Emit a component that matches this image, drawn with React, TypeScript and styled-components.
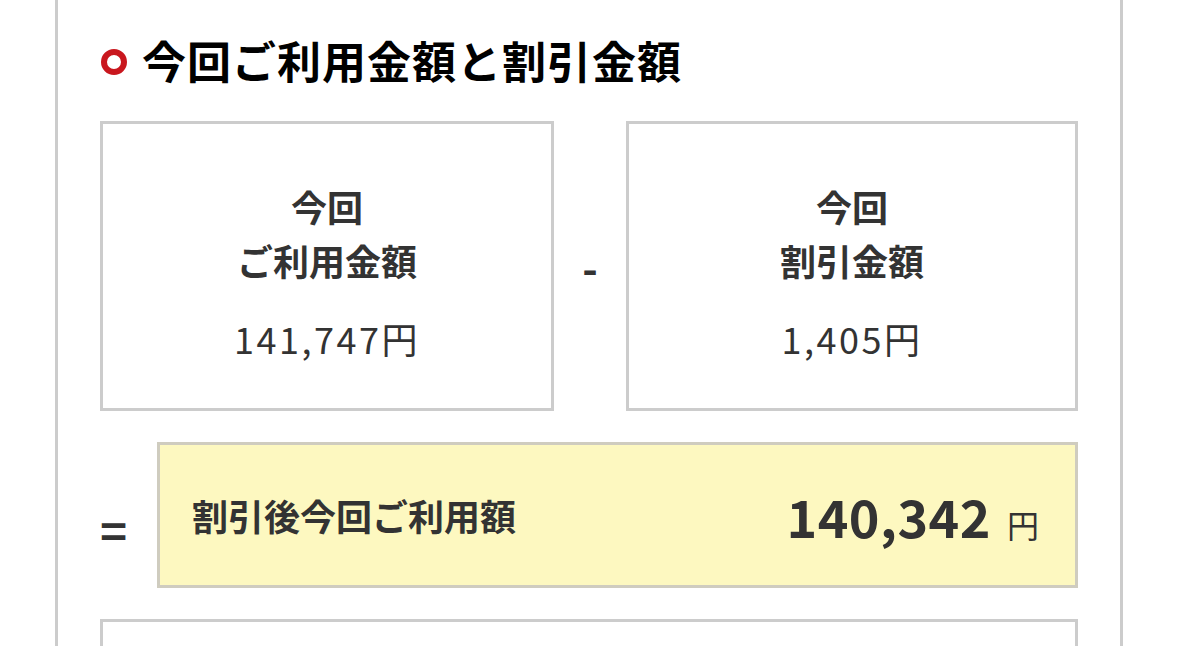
import React from "react";
import styled, { createGlobalStyle } from "styled-components";

const Global = createGlobalStyle`
  html, body { margin: 0; padding: 0; background: #fff; }
  body {
    font-family: "Noto Sans CJK JP", "Noto Sans", sans-serif;
    color: #333;
    overflow: hidden;
  }
`;

const Panel = styled.div`
  box-sizing: border-box;
  margin-left: 55px;
  width: 1068px;
  min-height: 700px;
  border-left: 3px solid #cccccc;
  border-right: 3px solid #cccccc;
  padding: 29px 42px 0 42px;
`;

const TitleRow = styled.div`
  display: flex;
  align-items: center;
  gap: 15px;
  height: 62px;
  margin-bottom: 30px;
`;

const Bullet = styled.span`
  box-sizing: border-box;
  flex: none;
  width: 26px;
  height: 26px;
  margin-left: 1px;
  margin-top: 4px;
  border-radius: 50%;
  border: 6px solid #c9171e;
`;

const Title = styled.h2`
  margin: 0;
  font-size: 44px;
  line-height: 62px;
  font-weight: 700;
  color: #000;
  letter-spacing: 1px;
`;

const BoxRow = styled.div`
  display: grid;
  grid-template-columns: 454px 1fr 452px;
  height: 290px;
`;

const AmountBox = styled.div`
  box-sizing: border-box;
  border: 3px solid #cccccc;
  display: flex;
  flex-direction: column;
  align-items: center;
  justify-content: center;
  padding-top: 12px;
  background: #fff;
`;

const BoxLabel = styled.div`
  font-size: 36px;
  line-height: 54px;
  font-weight: 700;
  color: #333;
  text-align: center;
`;

const BoxAmount = styled.div`
  margin-top: 24px;
  font-size: 36px;
  line-height: 54px;
  font-weight: 400;
  color: #333;
  letter-spacing: 2.5px;
`;

const Operator = styled.div<{ $offset?: number }>`
  display: flex;
  align-items: center;
  justify-content: center;
  font-size: 42px;
  font-weight: 700;
  color: #333;
  padding-top: ${(p) => p.$offset ?? 0}px;
`;

const ResultRow = styled.div`
  display: grid;
  grid-template-columns: 57px 1fr;
  height: 146px;
  margin-top: 31px;
`;

const EqualsCell = styled.div`
  display: flex;
  align-items: center;
  justify-content: flex-start;
  padding-top: 28px;
  font-size: 46px;
  font-weight: 700;
  color: #333;
  line-height: 1;
`;

const ResultBox = styled.div`
  box-sizing: border-box;
  border: 3px solid #cfccbf;
  background: #fdf8c0;
  display: flex;
  align-items: center;
  justify-content: space-between;
  padding: 0 36px 0 32px;
`;

const ResultLabel = styled.div`
  font-size: 36px;
  font-weight: 700;
  color: #333;
`;

const ResultValue = styled.div`
  display: flex;
  align-items: baseline;
  gap: 16px;
  color: #333;
`;

const BigNumber = styled.span`
  font-size: 52px;
  font-weight: 700;
  letter-spacing: 0.5px;
`;

const Yen = styled.span`
  font-size: 32px;
  font-weight: 400;
`;

const NextBox = styled.div`
  box-sizing: border-box;
  margin-top: 31px;
  height: 120px;
  border: 3px solid #cccccc;
`;

export default function App() {
  return (
    <>
      <Global />
      <Panel>
        <TitleRow>
          <Bullet />
          <Title>今回ご利用金額と割引金額</Title>
        </TitleRow>
        <BoxRow>
          <AmountBox>
            <BoxLabel>
              今回
              <br />
              ご利用金額
            </BoxLabel>
            <BoxAmount>141,747円</BoxAmount>
          </AmountBox>
          <Operator $offset={0}>-</Operator>
          <AmountBox>
            <BoxLabel>
              今回
              <br />
              割引金額
            </BoxLabel>
            <BoxAmount>1,405円</BoxAmount>
          </AmountBox>
        </BoxRow>
        <ResultRow>
          <EqualsCell>=</EqualsCell>
          <ResultBox>
            <ResultLabel>割引後今回ご利用額</ResultLabel>
            <ResultValue>
              <BigNumber>140,342</BigNumber>
              <Yen>円</Yen>
            </ResultValue>
          </ResultBox>
        </ResultRow>
        <NextBox />
      </Panel>
    </>
  );
}
